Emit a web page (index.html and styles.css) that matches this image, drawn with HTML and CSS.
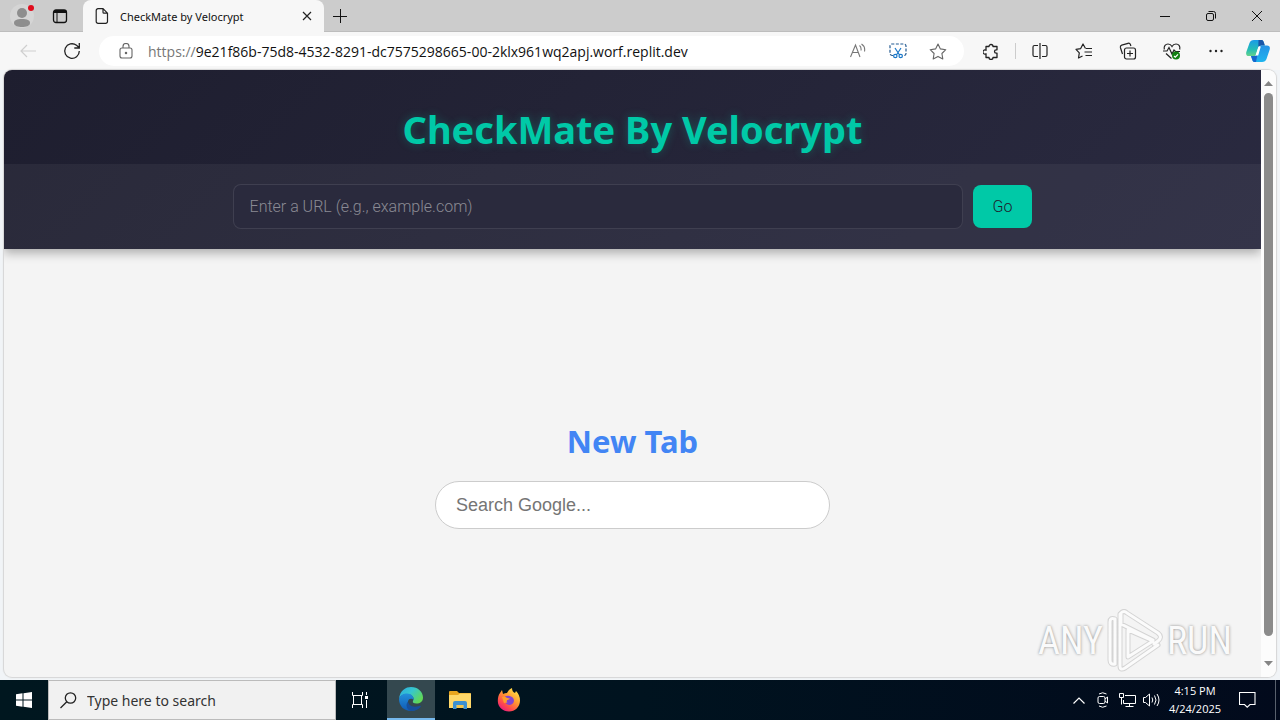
FILE: index.html
```html
<!DOCTYPE html>
<html lang="en">
<head>
<title>CheckMate by Velocrypt</title>
<meta charset="utf-8">
<link rel="stylesheet" href="styles.css">
</head>
<body>

<div class="tabstrip">
	<button class="profile" aria-label="Profile">
		<svg width="28" height="28" viewBox="0 0 28 28"><circle cx="14" cy="14" r="12" fill="#d5d5d5"/><circle cx="14" cy="11" r="5" fill="#8e8e8e"/><path d="M6 21c0-3 3-4 8-4s8 1 8 4-4 4-8 4-8-1-8-4z" fill="#8e8e8e"/><circle cx="23" cy="6" r="3" fill="#e00b1c"/></svg>
	</button>
	<button class="workspaces" aria-label="Tab actions">
		<svg width="16" height="16" viewBox="0 0 16 16" fill="none" stroke="#111"><rect x="1.5" y="2" width="13" height="12.5" rx="2.5" stroke-width="1.3"/><path d="M2 3.5h12" stroke-width="3"/><path d="M5 5v9"/></svg>
	</button>
	<div class="tab">
		<svg width="14" height="16" viewBox="0 0 14 16" fill="none" stroke="#222" stroke-width="1.2"><path d="M3 .7h5l4.500 4.500V13.500a1.800 1.800 0 0 1-1.800 1.800H3a1.800 1.800 0 0 1-1.800-1.800v-11A1.800 1.800 0 0 1 3 .7zM8 .7v3.500a1 1 0 0 0 1 1h3.500"/></svg>
		<span class="tab-title">CheckMate by Velocrypt</span>
		<button aria-label="Close tab"><svg width="10" height="10" viewBox="0 0 10 10" stroke="#222" stroke-width="1.2"><path d="M1 1l8 8M9 1L1 9"/></svg></button>
	</div>
	<button class="newtab" aria-label="New tab"><svg width="14" height="14" viewBox="0 0 14 14" stroke="#111" stroke-width="1"><path d="M7.500 0v14M0 7.500h14"/></svg></button>
	<div class="winbtns">
		<button aria-label="Minimize"><svg width="10" height="10" viewBox="0 0 10 10" stroke="#111"><path d="M0 5.500h10"/></svg></button>
		<button aria-label="Restore"><svg width="10" height="10" viewBox="0 0 10 10" fill="none" stroke="#111"><rect x=".5" y="2.500" width="7" height="7" rx="1.500"/><path d="M2.500.5h5a2 2 0 0 1 2 2v5"/></svg></button>
		<button aria-label="Close"><svg width="10" height="10" viewBox="0 0 10 10" stroke="#111"><path d="M0 0l10 10M10 0L0 10"/></svg></button>
	</div>
</div>

<div class="toolbar">
	<button aria-label="Back" disabled><svg width="16" height="14" viewBox="0 0 16 14" fill="none" stroke="#cfcfcf" stroke-width="1.200"><path d="M16 7H1M7 1L1 7l6 6"/></svg></button>
	<button aria-label="Refresh"><svg width="18" height="18" viewBox="0 0 18 18" fill="none" stroke="#222" stroke-width="1.300"><path d="M16.300 9A7.300 7.300 0 1 1 13.500 3.300L16 5.500M16.300 1v5h-5"/></svg></button>
	<div class="address">
		<svg width="14" height="16" viewBox="0 0 14 16" fill="none" stroke="#666" stroke-width="1.100"><rect x="1" y="5" width="12" height="10" rx="2"/><path d="M4 5V3.500a3 3 0 0 1 6 0V5"/><circle cx="7" cy="10" r=".7" fill="#666"/></svg>
		<a class="url" href="#"><span>https://</span>9e21f86b-75d8-4532-8291-dc7575298665-00-2klx961wq2apj.worf.replit.dev</a>
		<button aria-label="Read aloud"><svg width="16" height="16" viewBox="0 0 16 16" fill="none" stroke="#777" stroke-width="1.100"><path d="M.5 14L5.500 2l4.500 12M2.300 9.500h6.200M9.500 2.500q2 1.500 1.500 5M11.500 1q4 2.500 3 7.500"/></svg></button>
		<button aria-label="Web capture"><svg width="18" height="16" viewBox="0 0 18 16" fill="none" stroke="#1b78c9" stroke-width="1.200"><path d="M4 12.500H3a2 2 0 0 1-2-2V3a2 2 0 0 1 2-2h12a2 2 0 0 1 2 2v7.500a2 2 0 0 1-2 2h-1" stroke-dasharray="3 1.500" stroke="#235a91"/><path d="M6 5l4.600 7M12 5l-4.600 7"/><circle cx="6.300" cy="13" r="1.700"/><circle cx="11.700" cy="13" r="1.700"/></svg></button>
		<button aria-label="Add to favorites"><svg width="18" height="17" viewBox="0 0 18 17" fill="none" stroke="#666" stroke-width="1.100" stroke-linejoin="round"><path d="M9 1l2.400 4.900 5.400.8-3.900 3.800.9 5.400L9 13.400l-4.800 2.500.9-5.400L1.200 6.700l5.400-.8z"/></svg></button>
	</div>
	<button class="ext" aria-label="Extensions"><svg width="16" height="17" viewBox="0 0 16 17" fill="none" stroke="#222" stroke-width="1.300" stroke-linejoin="round"><path d="M3 3.500h3a2 2 0 0 1 4 0h4v3.300h-.8a1.700 1.700 0 0 0 0 3.400h.8v4.300h-4a2 2 0 0 1-4 0H3v-3.800a2 2 0 1 1 0-3.400z"/></svg></button>
	<span class="sep"></span>
	<button aria-label="Split screen"><svg width="16" height="16" viewBox="0 0 16 16" fill="none" stroke="#222" stroke-width="1.200"><path d="M6 2.500H2.500a1.500 1.500 0 0 0-1.500 1.500v8a1.500 1.500 0 0 0 1.500 1.500H6M10 2.500h3.500A1.500 1.500 0 0 1 15 4v8a1.500 1.500 0 0 1-1.500 1.500H10M8 0v16"/></svg></button>
	<button aria-label="Favorites"><svg width="18" height="16" viewBox="0 0 18 16" fill="none" stroke="#222" stroke-width="1.200" stroke-linejoin="round"><path d="M10.500 5.500L8 1 5.700 5.600 1 6.400l3.300 3.400L3.500 15l4-2M11 5.500h6M9.500 9h7.500M10.500 12.500h6.500"/></svg></button>
	<button aria-label="Collections"><svg width="18" height="18" viewBox="0 0 18 18" fill="none" stroke="#222" stroke-width="1.200"><path d="M3.500 12L1.400 5.500a2 2 0 0 1 1.300-2.400L9 1.300a2 2 0 0 1 2.400 1.200l.5 1.500"/><rect x="5.500" y="6" width="11" height="11" rx="2"/><path d="M11 8.500v6M8 11.500h6"/></svg></button>
	<button aria-label="Browser essentials"><svg width="18" height="17" viewBox="0 0 18 17" fill="none" stroke="#222" stroke-width="1.200"><path d="M1.300 6.500C.5 3 2.800 1 5 1s3.200 1 4 2.500C9.800 2 11 1 13 1c2.500 0 4.500 2 3.700 5.500M0 8h4l2-3.500L9 11l2-4 1.500 1.500H17M3 10.500l5.500 5"/><circle cx="13" cy="12.500" r="4" fill="#128012" stroke="none"/><path d="M11 13l1.300 1.200L15 11.300" stroke="#fff"/></svg></button>
	<button aria-label="Settings and more"><svg width="14" height="4" viewBox="0 0 14 4" fill="#222"><circle cx="1.500" cy="2" r="1.200"/><circle cx="7" cy="2" r="1.200"/><circle cx="12.500" cy="2" r="1.200"/></svg></button>
	<button class="copilot" aria-label="Copilot"><svg width="24" height="22" viewBox="0 0 24 22">
		<defs>
			<linearGradient id="cpa" x1="0" y1="0" x2="0" y2="1"><stop offset="0" stop-color="#1a9be8"/><stop offset=".6" stop-color="#25bdb5"/><stop offset="1" stop-color="#65d38b"/></linearGradient>
			<linearGradient id="cpb" x1="0" y1="0" x2="0" y2="1"><stop offset="0" stop-color="#2492e6"/><stop offset="1" stop-color="#1fb5ee"/></linearGradient>
		</defs>
		<path d="M8 0h7.500c1.700 0 2 1.500 2.500 3l.8 2.500h-3.500c-2 0-2.700 1-3.200 2.500l-1.800 6c-.5 1.500-1 2-2.500 2H3c-2.500 0-3.300-1.500-2.700-4L3.500 3C4.300 1 5.500 0 8 0z" fill="url(#cpa)"/>
		<path d="M12.500 0h3c1.700 0 2 1.500 2.500 3l.8 2.500h-3.500c-1.500 0-2.500 1-3 2z" fill="#1956a8"/>
		<path d="M16 22H8.500c-1.700 0-2-1.500-2.500-3l-1-3h3.500c2 0 2.700-1 3.200-2.500l1.800-6c.5-1.500 1-2 2.500-2h5c2.500 0 3.300 1.500 2.700 4L20.500 19c-.8 2-2 3-4.500 3z" fill="url(#cpb)"/>
		<path d="M5 16h3.500c2 0 2.700-1 3.200-2.500L10 22H8.500c-1.700 0-2-1.500-2.500-3z" fill="#1666cd"/>
		<path d="M12.500 6.500h2.300l-2.600 9H9.500z" fill="#fff"/>
	</svg></button>
</div>

<div class="viewport">
	<div class="page">
		<header class="header">
			<h1>CheckMate By Velocrypt</h1>
			<form class="nav">
				<input type="text" aria-label="URL" placeholder="Enter a URL (e.g., example.com)">
				<button type="button">Go</button>
			</form>
		</header>
		<main class="content">
			<h2>New Tab</h2>
			<input class="search" type="text" aria-label="Search Google" placeholder="Search Google...">
		</main>
	</div>
	<div class="scrollbar">
		<svg width="9" height="5" viewBox="0 0 9 5"><path d="M0 5L4.500 0 9 5z" fill="#858585"/></svg>
		<div class="thumb"></div>
		<svg width="9" height="5" viewBox="0 0 9 5"><path d="M0 0l4.500 5L9 0z" fill="#858585"/></svg>
	</div>
	<div class="watermark">
		<span>ANY</span>
		<svg width="56" height="64" viewBox="0 0 56 64" fill="none" stroke-linejoin="round" stroke-linecap="round">
			<path d="M8 55V10q-5-2-5 3v38q0 5 5 4M13 5v52q0 5 5 2l33-23M14 4q3-3 6 0l31 20q5 4 0 8l-4 3M14 4v11l32 16M21 21v27l25-16z" stroke="#d4d4d4" stroke-width="5"/>
			<path d="M8 55V10q-5-2-5 3v38q0 5 5 4M13 5v52q0 5 5 2l33-23M14 4q3-3 6 0l31 20q5 4 0 8l-4 3M14 4v11l32 16M21 21v27l25-16z" stroke="#fbfbfb" stroke-width="3"/>
		</svg>
		<span>RUN</span>
	</div>
</div>

<div class="taskbar">
	<button class="start" aria-label="Start"><svg width="16" height="16" viewBox="0 0 16 16" fill="#fff"><path d="M0 2.200L6.500 1.300v6.200H0zM7.500 1.200L16 0v7.500H7.500zM0 8.500h6.500v6.200L0 13.800zM7.500 8.500H16V16l-8.500-1.200z"/></svg></button>
	<label class="tasksearch">
		<svg width="17" height="17" viewBox="0 0 17 17" fill="none" stroke="#222" stroke-width="1.300"><circle cx="10.500" cy="6" r="5.200"/><path d="M6.800 9.800L.5 16"/></svg>
		<input type="text" aria-label="Search" placeholder="Type here to search">
	</label>
	<button class="taskview" aria-label="Task view"><svg width="17" height="16" viewBox="0 0 17 16" fill="none" stroke="#fff"><path d="M.5 0v3.500h10V0M.5 16v-3.500h10V16M1.500 3.500v9M9.500 3.500v9M14.500 0v3M14.500 8v8"/><path d="M13 4h3v3h-3z" fill="#fff" stroke="none"/></svg></button>
	<button class="active" aria-label="Microsoft Edge"><svg width="24" height="24" viewBox="0 0 24 24">
		<defs>
			<linearGradient id="ega" x1="0" y1="0" x2="1" y2=".6"><stop offset="0" stop-color="#2ba9e0"/><stop offset=".5" stop-color="#36c6cf"/><stop offset="1" stop-color="#61d856"/></linearGradient>
			<linearGradient id="egb" x1="0" y1="0" x2="0" y2="1"><stop offset="0" stop-color="#2390db"/><stop offset="1" stop-color="#105ab4"/></linearGradient>
		</defs>
		<path d="M0 12C1 3 7 0 12 0c7 0 12 5 12 10.500 0 4-3 6-6.500 6-3 0-4.300-1.200-3.500-2.500 2-3-1-7-5.500-7C4 7 1 9 0 12z" fill="url(#ega)"/>
		<path d="M0 12c1-4 4.500-5.500 8-5.500 4.500 0 7.500 3.500 6.500 6.500-1-1.500-5-2-5.500 1.500-.5 4 4 8.500 10.500 6-2 2.500-5 3.500-7.500 3.500-7 0-12-5-12-12z" fill="url(#egb)"/>
		<path d="M9 14.500c.5 4 5 6.500 11 4.500 1.500-.5 2.300 0 1.500 1-2 2.500-5.500 4-9.500 4-4-1-6-6-3-9.500z" fill="#174f9b"/>
	</svg></button>
	<button aria-label="File Explorer"><svg width="22" height="18" viewBox="0 0 22 18"><path d="M0 1q0-1 1-1h7l2 2h11q1 0 1 1v14H0z" fill="#e9a61f"/><path d="M0 4h9l2-1.500h11V17H0z" fill="#ffd869"/><path d="M4 18v-6q0-2 2-2h10q2 0 2 2v6h-3.500v-4h-7v4z" fill="#3d91d0"/><path d="M8 14h6v3H8z" fill="#f5c64c"/></svg></button>
	<button aria-label="Firefox"><svg width="24" height="24" viewBox="0 0 24 24">
		<defs><linearGradient id="ffa" x1=".9" y1="0" x2=".2" y2="1"><stop offset="0" stop-color="#fff04b"/><stop offset=".45" stop-color="#ff9831"/><stop offset=".75" stop-color="#ff4a4c"/><stop offset="1" stop-color="#e71587"/></linearGradient></defs>
		<path d="M3 5l2-3 1 4q2-1 4-1 2-4 5-5 0 4 3 5l1-2q4 4 4 9.500C23 19 18 23.500 12 23.500S.8 19 .8 13C.8 9.500 1.500 7 3 5z" fill="url(#ffa)"/>
		<path d="M8 8.500q3-1.500 6 0c3 1.500 3.500 4 2.500 6-1.200 2.500-4.500 3-6.500 1.700-2-1.200-2.500-3.500-1.500-4.700z" fill="#8245d0"/>
		<path d="M5 9q3-1.500 5 1 2 0 3 1l-3 1.300q-1 1.200.5 2.200L7 15z" fill="#ff9e2b"/>
	</svg></button>
	<div class="tray">
		<button aria-label="Show hidden icons"><svg width="12" height="7" viewBox="0 0 12 7" fill="none" stroke="#fff" stroke-width="1.200"><path d="M.5 6.500L6 1l5.500 5.500"/></svg></button>
		<button aria-label="Meet now"><svg width="12" height="16" viewBox="0 0 12 16" fill="none" stroke="#fff"><rect x="1" y="4.500" width="7" height="7" rx="1.500"/><path d="M8 7l2.500-2v6L8 9M2 2q3.500-2.500 7.500 0M2 14q3.500 2.500 7.500 0"/></svg></button>
		<button aria-label="Network"><svg width="17" height="15" viewBox="0 0 17 15" fill="none" stroke="#fff"><path d="M6 2.500h10.500v8H4.500V7M10.500 11v3M6.500 13.500h8"/><path d="M.5.500h4v4h-4zM2.500 4.500v7"/></svg></button>
		<button aria-label="Volume"><svg width="17" height="14" viewBox="0 0 17 14" fill="none" stroke="#fff"><path d="M.5 4.500h2L6.500 1v12l-4-3.500h-2zM9 4.500q1.500 2.500 0 5M11.500 2.500q3 4.500 0 9M14 1q4 6 0 12"/></svg></button>
		<div class="clock"><span>4:15 PM</span><span>4/24/2025</span></div>
		<button class="notif" aria-label="Notifications"><svg width="17" height="16" viewBox="0 0 17 16" fill="none" stroke="#fff" stroke-width="1.100"><path d="M.5.500h15.500v12H11L8.200 15.200 5.500 12.500h-5z"/></svg></button>
	</div>
</div>

</body>
</html>
```

FILE: styles.css
```css
* {
	box-sizing:border-box;
}
body {
	margin:0;
	height:100vh;
	display:flex;
	flex-direction:column;
	overflow:hidden;
	background:#f1f4f7;
	font-family:"Noto Sans", "Open Sans", sans-serif;
	font-size:12px;
	color:#111;
}
button {
	display:flex;
	align-items:center;
	justify-content:center;
	padding:0;
	border:0;
	background:none;
}
input {
	min-width:0;
	outline:0;
}
svg {
	flex:none;
	display:block;
}

/* tabs */
.tabstrip {
	display:flex;
	flex:none;
	height:32px;
	background:#ccc;
	border-bottom:1px solid #bdbdbd;
}
.profile {
	width:44px;
}
.workspaces {
	width:32px;
}
.tab {
	display:flex;
	align-items:center;
	width:241px;
	height:32px;
	margin-left:7px;
	padding:0 12px;
	gap:11px;
	background:#f7f7f7;
	border-radius:8px 8px 0 0;
}
.tab-title {
	flex:1;
	font-size:11px;
}
.newtab {
	width:32px;
}
.winbtns {
	display:flex;
	margin-left:auto;
}
.winbtns button {
	width:46px;
}

/* address bar */
.toolbar {
	display:flex;
	align-items:center;
	flex:none;
	height:38px;
	padding-left:6px;
	background:#f7f7f7;
}
.toolbar button {
	width:44px;
	height:30px;
}
.address {
	display:flex;
	flex:1;
	align-items:center;
	min-width:0;
	height:30px;
	margin:0 5px;
	padding:0 6px 0 20px;
	background:#fff;
	border-radius:15px;
}
.toolbar .address button {
	width:40px;
}
.url {
	flex:1;
	margin-left:15px;
	overflow:hidden;
	white-space:nowrap;
	font-family:"Open Sans", sans-serif;
	font-size:14px;
	color:#111;
	text-decoration:none;
}
.url span {
	color:#777;
}
.sep {
	width:1px;
	height:16px;
	margin:0 2px;
	background:#ccc;
}
.toolbar .copilot {
	width:42px;
	padding-right:2px;
}

/* page */
.viewport {
	position:relative;
	display:flex;
	flex:1;
	min-height:0;
	margin:0 4px 3px;
	overflow:hidden;
	background:#f4f4f4;
	border-radius:8px;
	box-shadow:0 0 1px 1px #d5d5d5;
}
.page {
	display:flex;
	flex:1;
	flex-direction:column;
	overflow:hidden;
}
.header {
	background:linear-gradient(135deg, #1e1e2f, #2a2a40);
	box-shadow:0 4px 10px rgba(0,0,0,.3);
}
h1 {
	margin:0;
	padding:32px 0 8px;
	line-height:54px;
	text-align:center;
	font-size:38px;
	color:#00c9a7;
	text-shadow:0 0 10px rgba(0,201,167,.3);
}
.nav {
	display:flex;
	align-items:center;
	justify-content:center;
	gap:10px;
	padding:20px;
	background:rgba(255,255,255,.05);
}
.nav input {
	width:730px;
	height:45px;
	padding:0 16px;
	border:1px solid rgba(255,255,255,.1);
	border-radius:8px;
	background:#2a2a3d;
	color:#fff;
	font:300 16px Roboto, "Liberation Sans", sans-serif;
}
.nav input::placeholder {
	color:#8a8a94;
}
.nav button {
	height:43px;
	padding:0 20px;
	border-radius:8px;
	background:#00c9a7;
	color:#1e1e2f;
	font:300 16px Roboto, "Liberation Sans", sans-serif;
}
.content {
	display:flex;
	flex:1;
	flex-direction:column;
	align-items:center;
	justify-content:center;
	padding-top:24px;
}
h2 {
	margin:0 0 20px;
	line-height:40px;
	font-size:31px;
	color:#4285f4;
}
.search {
	width:395px;
	height:48px;
	padding:0 20px;
	border:1px solid #ccc;
	border-radius:24px;
	background:#fff;
	font:18px "Liberation Sans", sans-serif;
}
.search::placeholder {
	color:#757575;
}
.scrollbar {
	display:flex;
	flex-direction:column;
	align-items:center;
	width:15px;
	padding:11px 0;
	gap:7px;
	background:#fcfcfc;
}
.thumb {
	flex:1;
	width:9px;
	margin-bottom:18px;
	border-radius:5px;
	background:#8b8b8b;
}
.watermark {
	position:absolute;
	right:44px;
	bottom:4px;
	display:flex;
	align-items:center;
	gap:4px;
	font:38px "Liberation Sans Narrow", "Roboto Condensed", "Liberation Sans", sans-serif;
	color:#fafafa;
	text-shadow:0 0 3px #888;
}

/* taskbar */
.taskbar {
	display:flex;
	flex:none;
	height:40px;
	background:linear-gradient(90deg, #00171f, #00131f 50%, #020a1c);
}
.taskbar button {
	width:48px;
	margin-right:1px;
}
.taskbar .start {
	margin:0;
}
.tasksearch {
	display:flex;
	align-items:center;
	width:288px;
	padding:0 11px;
	gap:10px;
	border:1px solid #bbb;
	background:#f1f1f1;
}
.tasksearch input {
	flex:1;
	padding:0;
	border:0;
	background:none;
	font:14px "Noto Sans", sans-serif;
}
.tasksearch input::placeholder {
	color:#333;
}
.taskbar .taskview {
	margin-right:3px;
}
.taskbar .active {
	background:#34484f;
	border-bottom:2px solid #76b9ed;
}
.tray {
	display:flex;
	margin-left:auto;
	margin-right:4px;
	border-right:1px solid #59616d;
}
.taskbar .tray button {
	width:24px;
	margin:0;
}
.clock {
	display:flex;
	flex-direction:column;
	align-items:center;
	justify-content:center;
	width:64px;
	line-height:18px;
	font-family:"Open Sans", sans-serif;
	font-size:11px;
	color:#fff;
}
.taskbar .tray .notif {
	width:40px;
	margin-right:8px;
}
```
